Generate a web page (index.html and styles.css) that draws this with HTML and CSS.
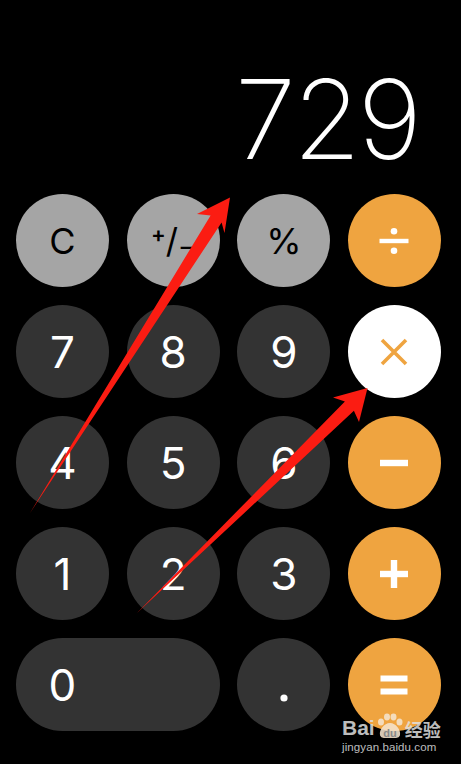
FILE: index.html
```html
<!DOCTYPE html>
<html lang="en">
<head>
  <meta charset="UTF-8" />
  <title>Calculator</title>
  <meta name="viewport" content="width=device-width, initial-scale=1.0" />
  <link rel="stylesheet" href="styles.css">
</head>
<body>
  <div class="calc">
    <div class="display">729</div>

    <div class="keypad">
      <button class="key fn"><span class="small">C</span></button>
      <button class="key fn"><span class="sign"><sup>+</sup>/<sub>−</sub></span></button>
      <button class="key fn"><span class="small">%</span></button>
      <button class="key op">
        <svg width="30" height="30" viewBox="0 0 30 30">
          <rect x="0.5" y="12.8" width="29" height="4.4" fill="#fff" />
          <circle cx="15" cy="5.2" r="3.3" fill="#fff" />
          <circle cx="15" cy="24.8" r="3.3" fill="#fff" />
        </svg>
      </button>

      <button class="key num">7</button>
      <button class="key num">8</button>
      <button class="key num">9</button>
      <button class="key op active">
        <svg width="30" height="30" viewBox="0 0 30 30">
          <path d="M3 3 L27 27 M27 3 L3 27" stroke="#efa440" stroke-width="3.6" fill="none" />
        </svg>
      </button>

      <button class="key num">4</button>
      <button class="key num">5</button>
      <button class="key num">6</button>
      <button class="key op">
        <svg width="30" height="30" viewBox="0 0 30 30">
          <rect x="1" y="11.8" width="28" height="6.4" fill="#fff" />
        </svg>
      </button>

      <button class="key num">1</button>
      <button class="key num">2</button>
      <button class="key num">3</button>
      <button class="key op">
        <svg width="30" height="30" viewBox="0 0 30 30">
          <rect x="1" y="11.8" width="28" height="6.4" fill="#fff" />
          <rect x="11.8" y="1" width="6.4" height="28" fill="#fff" />
        </svg>
      </button>

      <button class="key num zero"><span class="zero-label">0</span></button>
      <button class="key num">
        <svg class="dot" width="10" height="10" viewBox="0 0 10 10">
          <circle cx="5" cy="5" r="3.6" fill="#fff" />
        </svg>
      </button>
      <button class="key op">
        <svg width="30" height="30" viewBox="0 0 30 30">
          <rect x="1.5" y="5.5" width="27" height="6" fill="#fff" />
          <rect x="1.5" y="18.5" width="27" height="6" fill="#fff" />
        </svg>
      </button>
    </div>
  </div>

  <!-- red annotation arrows drawn over the screenshot -->
  <svg class="arrows" width="461" height="764" viewBox="0 0 461 764">
    <polygon fill="#fb1c12" points="30,513 210.6,215.5 197,214 230,197.5 224.5,233 221.6,222.5" />
    <polygon fill="#fb1c12" points="137,613 344.9,401.4 333,397.5 367.5,388 359,422 353.9,410.8" />
  </svg>

  <div class="watermark">
    <div class="wm-logo">
      <span>Bai</span>
      <svg class="paw" width="28" height="26" viewBox="0 0 28 26">
        <ellipse cx="5" cy="9" rx="3" ry="3.6" />
        <ellipse cx="11" cy="4" rx="3" ry="3.4" />
        <ellipse cx="17.5" cy="4" rx="3" ry="3.4" />
        <ellipse cx="23.5" cy="9" rx="3" ry="3.6" />
        <path d="M14 10 C8 10 3 17 4 22 C5 26 10 25 14 25 C18 25 23 26 24 22 C25 17 20 10 14 10 Z" />
        <text x="14" y="23.5" text-anchor="middle" class="du">du</text>
      </svg>
      <span class="cn">经验</span>
    </div>
    <div class="wm-url">jingyan.baidu.com</div>
  </div>
</body>
</html>
```

FILE: styles.css
```css
body {
  margin: 0;
  background: #000;
  font-family: 'Inter', 'Roboto', sans-serif;
  width: 461px;
  height: 764px;
  overflow: hidden;
  position: relative;
}

.display {
  height: 194px;
  box-sizing: border-box;
  padding: 54px 42px 0 0;
  text-align: right;
  color: #fff;
  font-family: 'Inter', sans-serif;
  font-weight: 200;
  font-size: 110px;
  line-height: 130px;
  letter-spacing: -3px;
}

.keypad {
  display: grid;
  grid-template-columns: repeat(4, 93px);
  grid-auto-rows: 93px;
  column-gap: 17.67px;
  row-gap: 18px;
  padding-left: 16px;
}

.key {
  border: none;
  border-radius: 50%;
  padding: 0;
  margin: 0;
  display: flex;
  align-items: center;
  justify-content: center;
  font-family: inherit;
  font-size: 44px;
  font-weight: 400;
  line-height: 1;
  cursor: pointer;
}

.fn {
  background: #a5a5a5;
  color: #000;
}

.num {
  background: #333333;
  color: #fff;
}

.op {
  background: #efa440;
}

.op.active {
  background: #fff;
}

.small {
  font-size: 36px;
}

.sign {
  font-size: 34px;
  display: flex;
  align-items: center;
}

.sign sup {
  font-size: 22px;
  position: relative;
  top: -7px;
  font-weight: 600;
}

.sign sub {
  font-size: 26px;
  position: relative;
  top: 5px;
}

.dot {
  margin-top: 27px;
}

.zero {
  grid-column: span 2;
  border-radius: 46.5px;
  justify-content: flex-start;
}

.zero-label {
  width: 93px;
  text-align: center;
}

.arrows {
  position: absolute;
  top: 0;
  left: 0;
}

.watermark {
  position: absolute;
  left: 342px;
  top: 708px;
  color: rgba(225, 225, 225, 0.85);
  font-family: 'Liberation Sans', 'Noto Sans CJK SC', sans-serif;
}

.wm-logo {
  display: flex;
  align-items: flex-end;
  height: 30px;
  font-size: 21px;
  font-weight: 700;
  line-height: 1;
}

.paw {
  fill: rgba(245, 228, 205, 0.88);
  margin: 0 0 -1px 1px;
}

.paw .du {
  fill: #888;
  font-size: 11px;
  font-weight: 700;
  font-family: 'Liberation Sans', sans-serif;
}

.cn {
  font-size: 18px;
  font-family: 'Noto Sans CJK SC', sans-serif;
  margin-left: 1px;
}

.wm-url {
  font-size: 11.5px;
  margin-top: 3px;
  letter-spacing: 0.1px;
}
```
